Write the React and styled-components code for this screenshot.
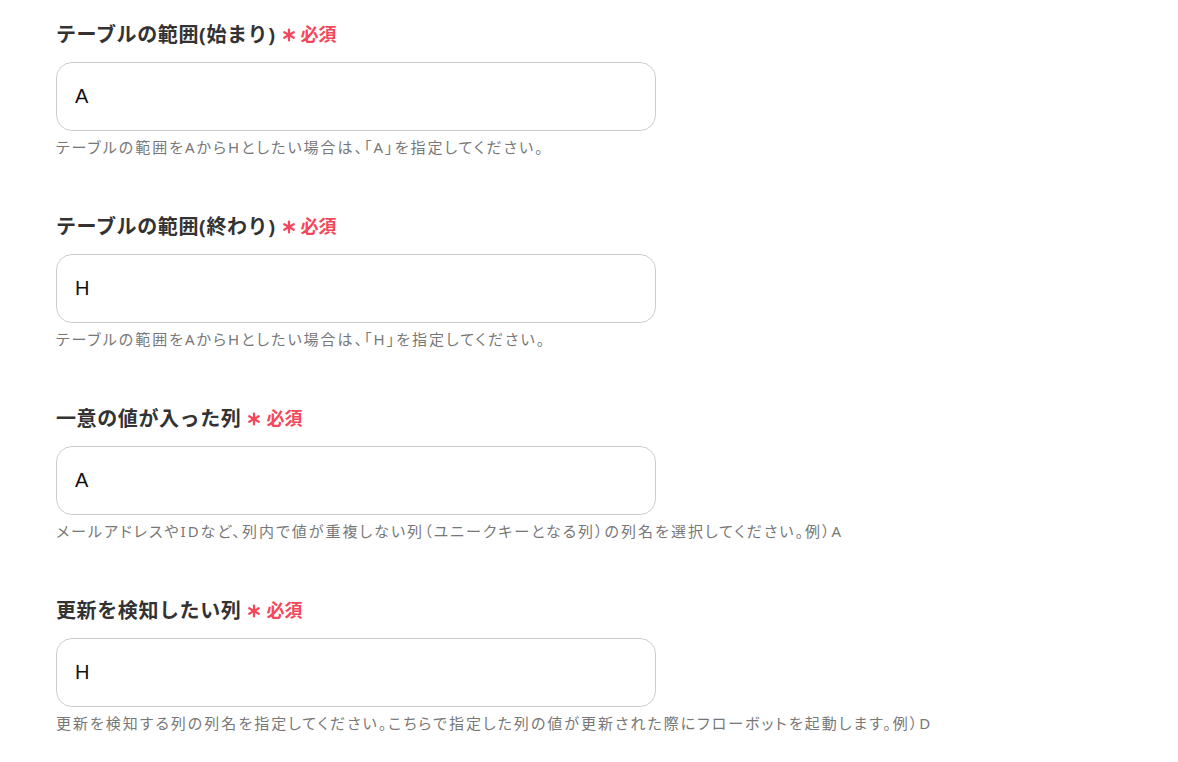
import React from 'react'
import styled, { createGlobalStyle } from 'styled-components'

const GlobalStyle = createGlobalStyle`
    body {
        margin: 0;
        background: #ffffff;
        font-family: "Noto Sans", "Noto Sans CJK JP", sans-serif;
    }
`

const Page = styled.div`
    padding: 19px 56px 0;
    display: flex;
    flex-direction: column;
    gap: 53px;
`

const Field = styled.div`
    display: flex;
    flex-direction: column;
`

const Label = styled.div`
    display: flex;
    align-items: center;
    gap: 6px;
    height: 28px;
    font-size: 20px;
    font-weight: 700;
    color: #333333;
    letter-spacing: 0.03em;
`

const Required = styled.span`
    display: flex;
    align-items: center;
    gap: 5px;
    color: #f5475b;
    font-size: 18px;
    font-weight: 700;
    letter-spacing: 0;
`

const Star = styled.svg`
    width: 14px;
    height: 14px;
    margin-top: 4px;
`

const Input = styled.div`
    margin-top: 15px;
    box-sizing: border-box;
    width: 600px;
    height: 69px;
    border: 1px solid #cccccc;
    border-radius: 16px;
    padding: 0 18px;
    display: flex;
    align-items: center;
    font-family: "Liberation Sans", "Noto Sans CJK JP", sans-serif;
    font-size: 20px;
    color: #111111;
`

const Help = styled.div`
    margin-top: 5px;
    font-size: 15px;
    line-height: 22px;
    color: #777777;
    white-space: nowrap;
    font-feature-settings: "palt";
    letter-spacing: 2px;
`

const fields = [
    {
        label: 'テーブルの範囲(始まり)',
        value: 'A',
        help: 'テーブルの範囲をAからHとしたい場合は、「A」を指定してください。',
    },
    {
        label: 'テーブルの範囲(終わり)',
        value: 'H',
        help: 'テーブルの範囲をAからHとしたい場合は、「H」を指定してください。',
    },
    {
        label: '一意の値が入った列',
        value: 'A',
        help: 'メールアドレスやIDなど、列内で値が重複しない列（ユニークキーとなる列）の列名を選択してください。例）A',
    },
    {
        label: '更新を検知したい列',
        value: 'H',
        help: '更新を検知する列の列名を指定してください。こちらで指定した列の値が更新された際にフローボットを起動します。例）D',
    },
]

function Asterisk() {
    return (
        <Star viewBox="0 0 14 14">
            <g stroke="currentColor" strokeWidth="2.2" strokeLinecap="round">
                <line x1="7" y1="1.5" x2="7" y2="12.5" />
                <line x1="2.2" y1="4.2" x2="11.8" y2="9.8" />
                <line x1="2.2" y1="9.8" x2="11.8" y2="4.2" />
            </g>
        </Star>
    )
}

export default function App() {
    return (
        <>
            <GlobalStyle />
            <Page>
                {fields.map((f, i) => (
                    <Field key={i}>
                        <Label>
                            {f.label}
                            <Required>
                                <Asterisk />必須
                            </Required>
                        </Label>
                        <Input>{f.value}</Input>
                        <Help>{f.help}</Help>
                    </Field>
                ))}
            </Page>
        </>
    )
}
